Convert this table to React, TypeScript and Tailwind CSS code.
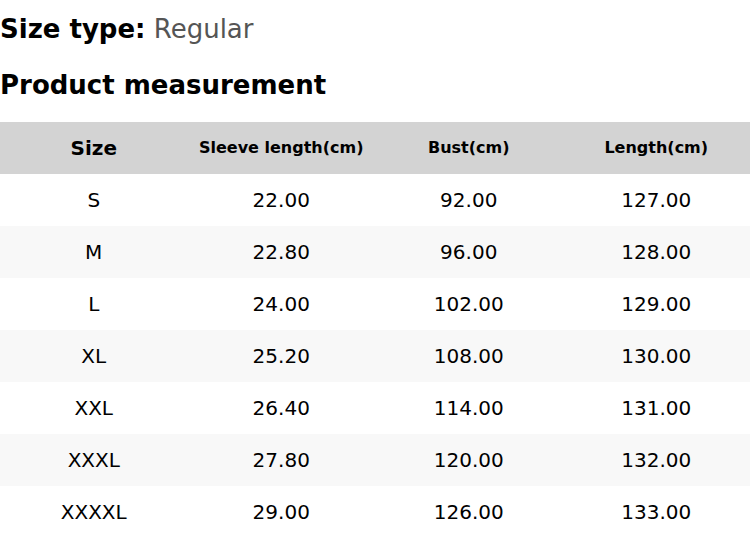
const rows: string[][] = [
  ['S', '22.00', '92.00', '127.00'],
  ['M', '22.80', '96.00', '128.00'],
  ['L', '24.00', '102.00', '129.00'],
  ['XL', '25.20', '108.00', '130.00'],
  ['XXL', '26.40', '114.00', '131.00'],
  ['XXXL', '27.80', '120.00', '132.00'],
  ['XXXXL', '29.00', '126.00', '133.00'],
];

export default function App() {
  return (
    <div className="w-[750px] h-[538px] overflow-hidden bg-white text-black font-['DejaVu_Sans',sans-serif]">
      <div className="pt-[10px]">
        <p className="text-[26px] leading-[39px]">
          <span className="font-bold">Size type:</span>{' '}
          <span className="text-[#555555]">Regular</span>
        </p>
        <h2 className="mt-[17px] text-[26px] leading-[39px] font-bold">Product measurement</h2>
      </div>

      <div className="mt-[17px]">
        <div className="grid grid-cols-4 h-[52px] items-center bg-[#d3d3d3] font-bold text-center">
          <div className="text-[20px]">Size</div>
          <div className="text-[16px]">Sleeve length(cm)</div>
          <div className="text-[16px]">Bust(cm)</div>
          <div className="text-[16px]">Length(cm)</div>
        </div>
        {rows.map((r, i) => (
          <div
            key={r[0]}
            className={`grid grid-cols-4 h-[52px] items-center text-center text-[20px] ${i % 2 === 1 ? 'bg-[#f8f8f8]' : 'bg-white'}`}
          >
            {r.map((c, j) => (
              <div key={j}>{c}</div>
            ))}
          </div>
        ))}
      </div>
    </div>
  );
}
